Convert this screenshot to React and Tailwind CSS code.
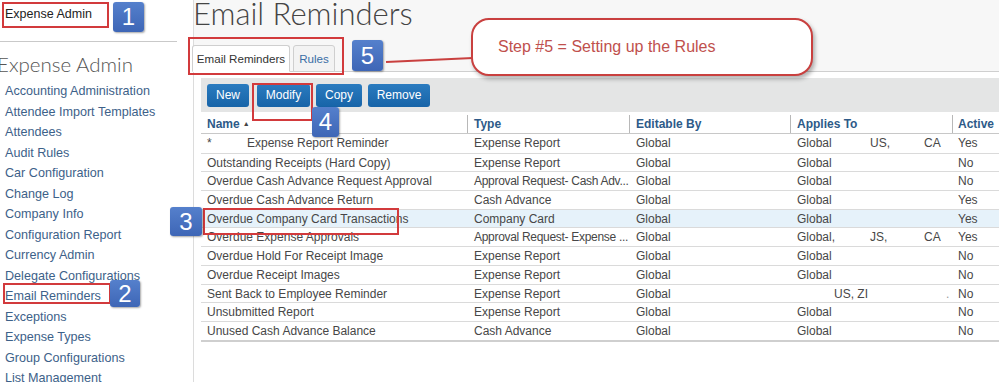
import React from 'react';

const links = [
  'Accounting Administration',
  'Attendee Import Templates',
  'Attendees',
  'Audit Rules',
  'Car Configuration',
  'Change Log',
  'Company Info',
  'Configuration Report',
  'Currency Admin',
  'Delegate Configurations',
  'Email Reminders',
  'Exceptions',
  'Expense Types',
  'Group Configurations',
  'List Management',
];

const rows = [
  { name: 'Expense Report Reminder', star: true, type: 'Expense Report', applies: ['Global', 'US,', 'CA'], active: 'Yes' },
  { name: 'Outstanding Receipts (Hard Copy)', type: 'Expense Report', applies: ['Global'], active: 'No' },
  { name: 'Overdue Cash Advance Request Approval', type: 'Approval Request- Cash Adv...', tight: true, applies: ['Global'], active: 'No' },
  { name: 'Overdue Cash Advance Return', type: 'Cash Advance', applies: ['Global'], active: 'Yes' },
  { name: 'Overdue Company Card Transactions', type: 'Company Card', applies: ['Global'], active: 'Yes', selected: true },
  { name: 'Overdue Expense Approvals', type: 'Approval Request- Expense ...', tight: true, applies: ['Global,', 'JS,', 'CA'], active: 'Yes' },
  { name: 'Overdue Hold For Receipt Image', type: 'Expense Report', applies: ['Global'], active: 'No' },
  { name: 'Overdue Receipt Images', type: 'Expense Report', applies: ['Global'], active: 'No' },
  { name: 'Sent Back to Employee Reminder', type: 'Expense Report', applies: ['', 'US, ZI', '.'], active: 'No' },
  { name: 'Unsubmitted Report', type: 'Expense Report', applies: ['Global'], active: 'No' },
  { name: 'Unused Cash Advance Balance', type: 'Cash Advance', applies: ['Global'], active: 'No' },
];

const cols = 'grid grid-cols-[266px_162px_161px_162px_48px]';

function Badge({ n, className }) {
  return (
    <div className={`absolute flex items-center justify-center rounded-[3px] bg-gradient-to-b from-[#5580cc] to-[#3e66b6] text-white text-[24px] leading-none shadow-[1px_1px_2px_rgba(0,0,0,0.35)] ${className}`}>
      {n}
    </div>
  );
}

function Applies({ a }) {
  return (
    <div className="relative h-full">
      <span className="absolute left-[7px]">{a[0]}</span>
      {a[1] && <span className={`absolute ${a[1] === 'US, ZI' ? 'left-[44px]' : 'left-[80px]'}`}>{a[1]}</span>}
      {a[2] && <span className={`absolute ${a[2] === '.' ? 'left-[156px] text-[#999]' : 'left-[134px]'}`}>{a[2]}</span>}
    </div>
  );
}

export default function App() {
  return (
    <div className="relative flex w-[999px] h-[382px] overflow-hidden bg-white font-['Liberation_Sans',Arial,sans-serif]">
      {/* sidebar */}
      <div className="w-[194px] shrink-0 border-r border-[#dcdcdc] bg-white">
        <div className="h-[41px] pt-[2px] pl-[2px]">
          <div className="w-[106px] h-[25px] flex items-center pl-[3px] text-[12.5px] text-[#222]">Expense Admin</div>
        </div>
        <div className="w-[177px] border-t border-[#c9c9c9]"></div>
        <div className="ml-[-3px] mt-[9px] h-[26px] text-[20.5px] leading-[26px] text-[#555] font-['Lato',sans-serif] font-light">Expense Admin</div>
        <ul className="mt-[4px] pl-[5px]">
          {links.map((l) => (
            <li key={l} className="h-[20.5px] leading-[20.5px] text-[12.6px] text-[#3d6189]">{l}</li>
          ))}
        </ul>
      </div>

      {/* main */}
      <div className="flex-1 flex flex-col">
        <div className="bg-[#f7f7f7] border-b border-[#cfcfcf] h-[72px] flex flex-col">
          <h1 className="ml-[-1px] mt-[-9px] h-[44px] text-[31px] leading-[44px] text-[#444] font-['Lato',sans-serif] font-light">Email Reminders</h1>
          <div className="mt-auto flex items-end gap-[3px] ml-[-2px] mb-[-1px]">
            <div className="h-[27px] w-[98px] flex items-center justify-center bg-white border border-[#cfcfcf] border-b-white rounded-t-[3px] text-[11.6px] text-[#333]">Email Reminders</div>
            <div className="h-[27px] w-[42px] flex items-center justify-center bg-[#f3f3f3] border border-[#cfcfcf] rounded-t-[3px] text-[11.6px] text-[#3a6ea5]">Rules</div>
          </div>
        </div>

        <div className="pl-[7px] pt-[6px]">
          <div className="h-[34px] bg-[#e4e5e5] flex items-center pl-[6px] gap-[6px]">
            <button className="h-[23px] w-[42px] rounded-[3px] bg-gradient-to-b from-[#2a7bbf] to-[#1764a8] text-white text-[12px] mr-[2px]">New</button>
            <button className="h-[23px] w-[53px] rounded-[3px] bg-gradient-to-b from-[#2a7bbf] to-[#1764a8] text-white text-[12px]">Modify</button>
            <button className="h-[23px] w-[46px] rounded-[3px] bg-gradient-to-b from-[#2a7bbf] to-[#1764a8] text-white text-[12px]">Copy</button>
            <button className="h-[23px] w-[62px] rounded-[3px] bg-gradient-to-b from-[#2a7bbf] to-[#1764a8] text-white text-[12px]">Remove</button>
          </div>

          <div className="mt-[2px] border-b-2 border-[#cfcfcf] text-[12px]">
            <div className={`${cols} h-[20px] border-b border-[#c8c8c8] font-bold text-[#2d5a88]`}>
              <div className="pl-[6px] flex items-center">Name <span className="ml-[3px] text-[7px] text-[#444]">▲</span></div>
              <div className="pl-[6px] flex items-center border-l border-[#b8b8b8] my-[1px]">Type</div>
              <div className="pl-[6px] flex items-center border-l border-[#b8b8b8] my-[1px]">Editable By</div>
              <div className="pl-[6px] flex items-center border-l border-[#b8b8b8] my-[1px]">Applies To</div>
              <div className="pl-[5px] flex items-center border-l border-[#b8b8b8] my-[1px]">Active</div>
            </div>
            {rows.map((r, i) => (
              <div key={r.name} className={`${cols} h-[18.7px] leading-[18px] text-[#474747] ${i > 0 ? 'border-t border-[#dadada]' : ''} ${r.selected ? 'bg-[#e6f2fa]' : ''}`}>
                <div className="pl-[6px] whitespace-nowrap">
                  {r.star ? (<><span className="inline-block w-[40px]">*</span>{r.name}</>) : r.name}
                </div>
                <div className={`pl-[7px] whitespace-nowrap overflow-hidden ${r.tight ? 'tracking-[-0.3px]' : ''}`}>{r.type}</div>
                <div className="pl-[7px]">Global</div>
                <Applies a={r.applies} />
                <div className="pl-[6px]">{r.active}</div>
              </div>
            ))}
          </div>
        </div>
      </div>

      {/* annotations */}
      <div className="absolute left-[2px] top-[2px] w-[107px] h-[26px] border-2 border-[#d23a3c]"></div>
      <Badge n="1" className="left-[113px] top-[2px] w-[31px] h-[30px]" />
      <div className="absolute left-[3px] top-[283px] w-[108px] h-[21px] border-2 border-[#d23a3c]"></div>
      <Badge n="2" className="left-[110px] top-[280px] w-[30px] h-[27px]" />
      <div className="absolute left-[203px] top-[208px] w-[196px] h-[27px] border-2 border-[#d23a3c]"></div>
      <Badge n="3" className="left-[170px] top-[207px] w-[32px] h-[29px]" />
      <div className="absolute left-[252px] top-[83px] w-[61px] h-[38px] border-2 border-[#d23a3c]"></div>
      <Badge n="4" className="left-[312px] top-[107px] w-[27px] h-[30px]" />
      <div className="absolute left-[188px] top-[37px] w-[156px] h-[38px] border-2 border-[#d23a3c]"></div>
      <Badge n="5" className="left-[352px] top-[40px] w-[31px] h-[31px]" />

      <svg className="absolute left-0 top-0" width="999" height="382">
        <line x1="386" y1="62" x2="473" y2="58" stroke="#c9403f" strokeWidth="2" />
      </svg>
      <div className="absolute left-[471px] top-[18px] w-[342px] h-[58px] rounded-[18px] border-2 border-[#c9403f] bg-white shadow-[2px_3px_4px_rgba(0,0,0,0.3)] flex items-center pl-[25px] text-[16px] text-[#c0504d]">
        Step #5 = Setting up the Rules
      </div>
    </div>
  );
}
